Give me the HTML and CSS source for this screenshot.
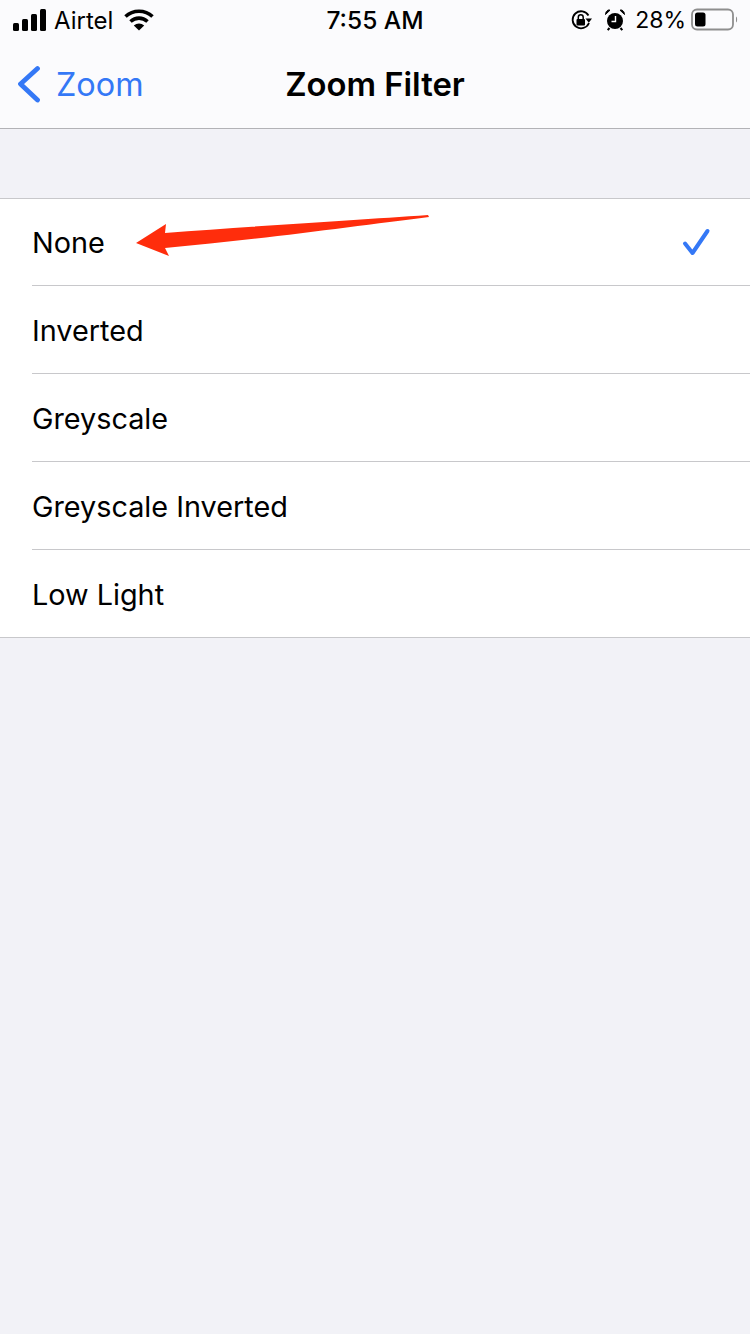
FILE: index.html
```html
<!DOCTYPE html>
<html lang="en">
<head>
<meta charset="utf-8">
<title>Zoom Filter</title>
<link rel="stylesheet" href="styles.css">
</head>
<body>
<header class="top">
  <div class="status">
    <div class="status-left">
      <svg class="signal" width="33" height="22" viewBox="0 0 33 22"><rect x="0" y="14" width="6" height="8" rx="1.5"/><rect x="9" y="10" width="6" height="12" rx="1.5"/><rect x="18" y="5" width="6" height="17" rx="1.5"/><rect x="27" y="0" width="6" height="22" rx="1.5"/></svg>
      <span class="carrier">Airtel</span>
      <svg class="wifi" width="30" height="22" viewBox="0 0 30 22"><path d="M1.5 7.5C9 .5 21 .5 28.5 7.5" fill="none" stroke="#000" stroke-width="3.6"/><path d="M6.5 12.5C11.500 8 18.500 8 23.500 12.500" fill="none" stroke="#000" stroke-width="3.6"/><path d="M15 21.500 9.800 16.500C12.800 13.800 17.200 13.800 20.200 16.500Z"/></svg>
    </div>
    <div class="clock">7:55 AM</div>
    <div class="status-right">
      <svg class="lock" width="22" height="22" viewBox="0 0 22 22"><path d="M19 14A8.500 8.500 0 1 1 18.500 6.500" fill="none" stroke="#000" stroke-width="1.800"/><path d="M15.500 9.500h6.500l-3.200 4.300Z"/><rect x="6.500" y="10" width="8.500" height="6.500" rx="1"/><path d="M8.300 10.500V8.200a2.450 2.450 0 0 1 4.900 0V10.500" fill="none" stroke="#000" stroke-width="1.500"/></svg>
      <svg class="alarm" width="20" height="22" viewBox="0 0 20 22"><circle cx="10" cy="12" r="8"/><path d="M.5 5.500 5 1.200C3 .2.500 2.500.5 5.500ZM19.500 5.500 15 1.200C17 .2 19.500 2.500 19.500 5.500Z" stroke="#000" stroke-width="1"/><path d="M4.500 19l-1.800 2.200M15.500 19l1.800 2.200" stroke="#000" stroke-width="2" fill="none"/><path d="M10.500 7V12.500H6.500" stroke="#fff" stroke-width="1.400" fill="none"/></svg>
      <span class="pct">28%</span>
      <svg class="battery" width="48" height="24" viewBox="0 0 48 24"><rect x="1" y="1.500" width="41" height="20" rx="5" fill="none" stroke="#8e8e8e" stroke-width="1.800"/><rect x="4" y="4.500" width="10.500" height="14" rx="2.500" fill="#000"/><path d="M45 8.500c1.500.6 1.500 5.400 0 6Z" fill="#8e8e8e"/></svg>
    </div>
  </div>
  <nav class="nav">
    <a class="back">
      <svg class="chevron" width="26" height="38" viewBox="0 0 26 38"><path d="M22.500 3.500 5.500 19 22.500 35" fill="none" stroke="#3478f6" stroke-width="4.800" stroke-linecap="round" stroke-linejoin="round"/></svg>
      <span>Zoom</span>
    </a>
    <h1 class="title">Zoom Filter</h1>
  </nav>
</header>
<main class="content">
  <ul class="list">
    <li class="row"><span>None</span><svg class="check" width="30" height="30" viewBox="0 0 30 30"><path d="M3 17.500 10.500 27 25.500 5" fill="none" stroke="#3478f6" stroke-width="4" stroke-linecap="round" stroke-linejoin="round"/></svg></li>
    <li class="row"><span>Inverted</span></li>
    <li class="row"><span>Greyscale</span></li>
    <li class="row"><span>Greyscale Inverted</span></li>
    <li class="row"><span>Low Light</span></li>
  </ul>
  <svg class="arrow" width="300" height="50" viewBox="0 0 300 50"><path d="M0 29 30 10 29 19C120 12 220 6 292 1L293 3C220 12 120 26 29 34L33 42Z" fill="#ff2d0c"/></svg>
</main>
</body>
</html>
```
FILE: styles.css
```css
* { box-sizing: border-box; }
html, body { margin: 0; padding: 0; }
body {
  width: 750px;
  height: 1334px;
  background: #f2f2f7;
  font-family: Inter, "Liberation Sans", sans-serif;
  color: #000;
  overflow: hidden;
}
.top {
  height: 129px;
  background: #fbfbfd;
  border-bottom: 1px solid #b2b2b6;
}
.status {
  height: 40px;
  padding: 0 13px;
  display: flex;
  align-items: center;
  justify-content: space-between;
  position: relative;
  font-size: 24px;
}
.status-left, .status-right { display: flex; align-items: center; }
.carrier { margin-left: 8px; margin-right: 1px; }
.wifi { margin-left: 10px; }
.clock {
  position: absolute;
  left: 0;
  right: 0;
  text-align: center;
  font-size: 24.5px;
  font-weight: 500;
}
.status-right { margin-right: -2px; }
.alarm { margin-left: 13px; }
.pct { margin-left: 10px; font-size: 23px; }
.battery { margin-left: 5px; }
.nav {
  height: 88px;
  position: relative;
  display: flex;
  align-items: center;
  justify-content: center;
}
.back {
  position: absolute;
  left: 15px;
  top: 0;
  bottom: 0;
  display: flex;
  align-items: center;
  gap: 15px;
  color: #3478f6;
  font-size: 32.4px;
}
.title {
  margin: 0;
  font-size: 32.8px;
  font-weight: 600;
}
.content {
  position: relative;
  padding-top: 69px;
}
.list {
  list-style: none;
  margin: 0;
  padding: 0 0 0 32px;
  background: #fff;
  border-top: 1px solid #c8c8cb;
  border-bottom: 1px solid #c8c8cb;
}
.row {
  height: 88px;
  padding-top: 2px;
  display: flex;
  align-items: center;
  justify-content: space-between;
  padding-right: 38px;
  font-size: 28.8px;
  border-bottom: 1px solid #c8c8cb;
}
.row:first-child { height: 87px; padding-top: 0; }
.row:last-child { height: 87px; border-bottom: 0; }
.check { margin-top: -2px; }
.arrow {
  position: absolute;
  left: 136px;
  top: 85px;
}
```
